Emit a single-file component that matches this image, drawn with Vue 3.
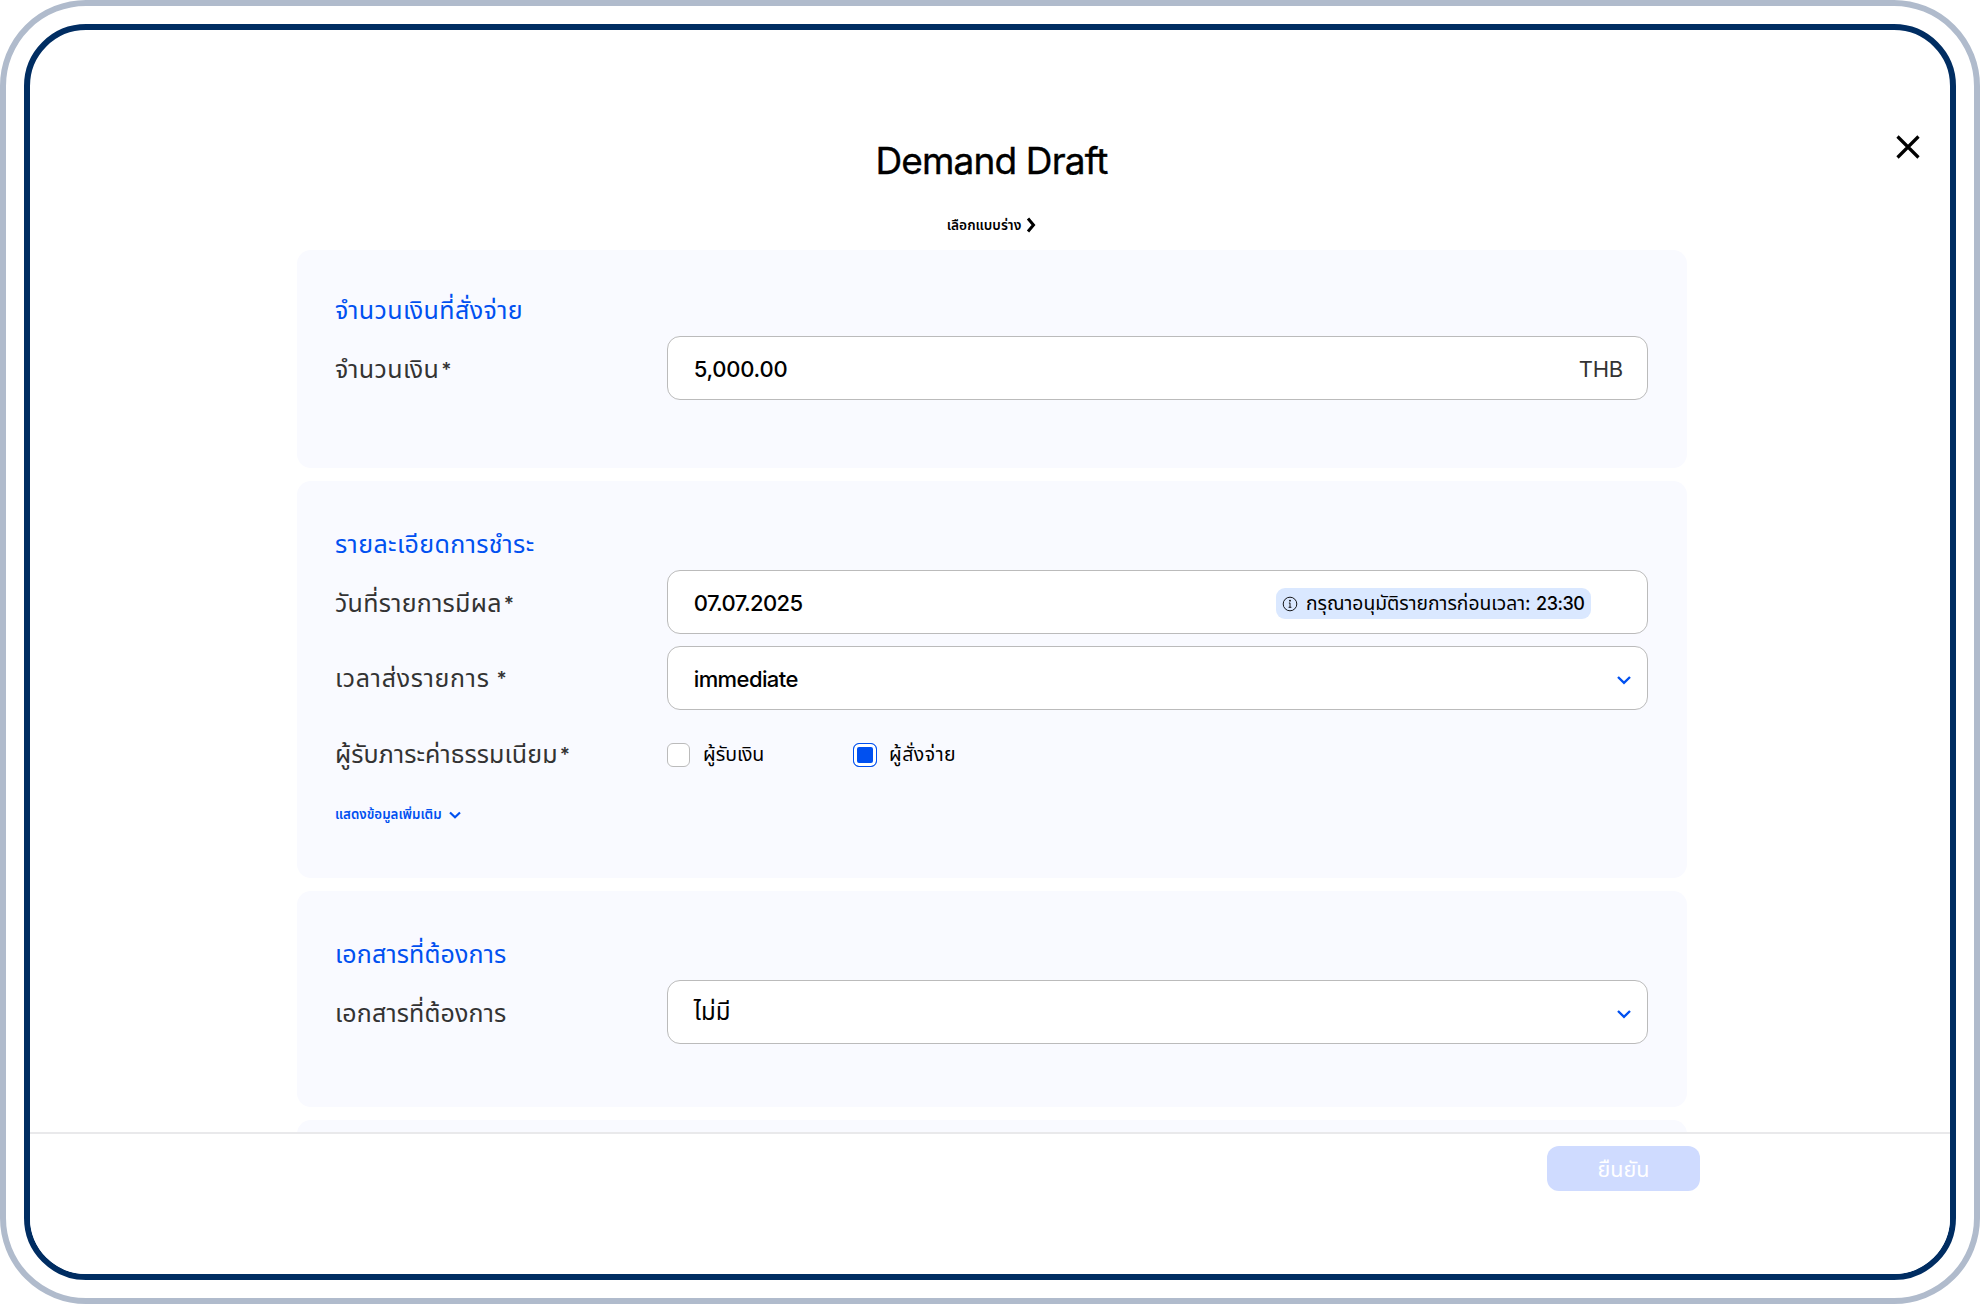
<template>
  <div class="device">
    <div class="screen">
      <button class="close" aria-label="close">
        <svg width="24" height="24" viewBox="0 0 24 24"><path d="M1.5 1.5L22.5 22.5M22.5 1.5L1.5 22.5" /></svg>
      </button>

      <header class="header">
        <h1>Demand Draft</h1>
        <a class="template-link">
          <span>เลือกแบบร่าง</span>
          <svg width="10" height="16" viewBox="0 0 10 16"><path d="M2 1.5L7.5 8L2 14.5" /></svg>
        </a>
      </header>

      <main class="content">
        <section class="card card-amount">
          <h2 class="t-amount">จำนวนเงินที่สั่งจ่าย</h2>
          <div class="row">
            <label><span class="l-amount">จำนวนเงิน</span><i>*</i></label>
            <div class="field">
              <span class="value v-amount">{{ form.amount }}</span>
              <span class="currency">THB</span>
            </div>
          </div>
        </section>

        <section class="card card-payment">
          <h2 class="t-payment">รายละเอียดการชำระ</h2>
          <div class="row">
            <label><span class="l-date">วันที่รายการมีผล</span><i>*</i></label>
            <div class="field">
              <span class="value v-date">{{ form.date }}</span>
              <span class="badge">
                <svg width="16" height="16" viewBox="0 0 16 16">
                  <circle cx="8" cy="8" r="6.8" />
                  <path d="M8 6.8V11.4M6.9 7H8M6.6 11.3H9.4" />
                  <circle class="dot" cx="8" cy="4.7" r="0.9" />
                </svg>
                <span class="badge-text">กรุณาอนุมัติรายการก่อนเวลา: <b>23:30</b></span>
              </span>
            </div>
          </div>
          <div class="row">
            <label><span class="l-time">เวลาส่งรายการ</span><i class="spaced">*</i></label>
            <div class="field">
              <span class="value v-time">{{ form.time }}</span>
              <svg class="chevron" width="16" height="12" viewBox="0 0 16 12"><path d="M2 3L8 8.8L14 3" /></svg>
            </div>
          </div>
          <div class="row">
            <label><span class="l-fee">ผู้รับภาระค่าธรรมเนียม</span><i>*</i></label>
            <div class="options">
              <div
                v-for="option in feeOptions"
                :key="option.id"
                class="option"
                :class="[option.id, { checked: form.fee === option.id }]"
                @click="form.fee = option.id"
              >
                <span class="box"></span>
                <span class="option-text">{{ option.label }}</span>
              </div>
            </div>
          </div>
          <a class="more">
            <span>แสดงข้อมูลเพิ่มเติม</span>
            <svg width="12" height="10" viewBox="0 0 12 10"><path d="M1 2.5L6 7.2L11 2.5" /></svg>
          </a>
        </section>

        <section class="card card-document">
          <h2 class="t-document">เอกสารที่ต้องการ</h2>
          <div class="row">
            <label><span class="l-document">เอกสารที่ต้องการ</span></label>
            <div class="field">
              <span class="value v-document">{{ form.document }}</span>
              <svg class="chevron" width="16" height="12" viewBox="0 0 16 12"><path d="M2 3L8 8.8L14 3" /></svg>
            </div>
          </div>
        </section>

        <section class="card card-next"></section>
      </main>

      <footer class="footer">
        <button class="confirm" disabled><span>ยืนยัน</span></button>
      </footer>
    </div>
  </div>
</template>

<script setup>
import { reactive } from 'vue';

const form = reactive({
  amount: '5,000.00',
  date: '07.07.2025',
  time: 'immediate',
  fee: 'payer',
  document: 'ไม่มี',
});

const feeOptions = [
  { id: 'payee', label: 'ผู้รับเงิน' },
  { id: 'payer', label: 'ผู้สั่งจ่าย' },
];
</script>

<style>
body {
  margin: 0;
  background: #fff;
}
</style>

<style scoped>
* {
  box-sizing: border-box;
}
.device {
  width: 1980px;
  height: 1304px;
  padding: 18px;
  border: 6px solid #b0bbcc;
  border-radius: 86px;
  font-family: Inter, "Noto Sans Thai", "Noto Sans", sans-serif;
  color: #000;
}
.screen {
  position: relative;
  display: flex;
  flex-direction: column;
  height: 1256px;
  border: 6px solid #002d62;
  border-radius: 62px;
  overflow: hidden;
}
svg {
  flex: none;
  fill: none;
  stroke: currentColor;
  stroke-width: 2;
}
button {
  border: none;
  background: none;
  padding: 0;
  font-family: inherit;
}
.close {
  position: absolute;
  top: 105px;
  right: 30px;
  width: 24px;
  height: 24px;
  color: #000;
}
.close svg {
  display: block;
  overflow: visible;
  stroke-width: 3.2;
}
.header {
  flex: none;
  height: 220px;
  padding: 106px 0 0 3px;
  display: flex;
  flex-direction: column;
  align-items: center;
}
h1 {
  margin: 0;
  font-size: 37px;
  font-weight: 400;
  line-height: 50px;
  letter-spacing: -0.85px;
  white-space: nowrap;
  -webkit-text-stroke: 0.4px #000;
}
.template-link {
  display: flex;
  align-items: center;
  gap: 5px;
  height: 20px;
  margin-top: 29px;
  font-size: 13.7px;
  font-weight: 600;
  line-height: 20px;
}
.template-link svg {
  stroke-width: 3;
}
.content {
  flex: none;
  height: 882px;
  width: 1390px;
  margin-left: 267px;
  overflow: hidden;
}
.card {
  padding: 0 39px 0 38px;
  margin-bottom: 13px;
  border-radius: 14px;
  background: #f9faff;
}
.card-amount {
  height: 218px;
  padding-top: 40px;
}
.card-payment {
  height: 397px;
  padding-top: 43px;
}
.card-document {
  height: 216px;
  padding-top: 43px;
}
.card-next {
  height: 216px;
}
h2 {
  height: 40px;
  margin: 0 0 6px;
  color: #0050f0;
  font-size: 25px;
  font-weight: 400;
  line-height: 40px;
  white-space: nowrap;
}
.t-amount,
.t-payment {
  letter-spacing: 0.4px;
}
.t-document,
.l-document {
  letter-spacing: 0.15px;
}
.row {
  display: flex;
  align-items: center;
  height: 64px;
  margin-bottom: 11.5px;
}
label {
  width: 332px;
  padding-top: 1px;
  color: #333;
  font-size: 25px;
  line-height: 40px;
  white-space: nowrap;
}
label i {
  margin-left: 2px;
  font-style: normal;
  font-size: 19px;
  font-weight: 600;
  line-height: 1;
  vertical-align: 2px;
}
label .spaced {
  margin-left: 7px;
}
.l-amount {
  letter-spacing: 0.4px;
}
.l-date {
  letter-spacing: 0.3px;
}
.l-time {
  letter-spacing: 0.7px;
}
.l-fee {
  letter-spacing: 0.1px;
}
.field {
  display: flex;
  align-items: center;
  width: 982px;
  height: 64px;
  padding: 2px 24px 0 26px;
  border: 1px solid #bbb;
  border-radius: 13px;
  background: #fff;
}
.value {
  flex: 1;
  font-size: 22px;
  font-weight: 500;
  white-space: nowrap;
}
.v-amount {
  letter-spacing: -0.25px;
}
.v-date,
.v-time {
  letter-spacing: -0.6px;
}
.v-document {
  font-size: 24px;
  font-weight: 400;
}
.currency {
  color: #333;
  font-size: 22px;
  letter-spacing: -0.2px;
}
.badge {
  display: flex;
  align-items: center;
  width: 315px;
  height: 31px;
  margin-right: 32px;
  padding-left: 6px;
  border-radius: 9px;
  background: #dae8ff;
  font-size: 19.3px;
  line-height: 31px;
  white-space: nowrap;
}
.badge b {
  font-size: 18px;
  font-weight: 500;
  letter-spacing: -0.5px;
}
.badge svg {
  margin: 2px 8px 0 0;
  stroke-width: 0.9;
}
.badge .dot {
  fill: #000;
  stroke: none;
}
.chevron {
  margin: 2px -9px 0 0;
  color: #0050f0;
  stroke-width: 2.4;
}
.options {
  display: flex;
  height: 24px;
  margin-top: 3px;
  font-size: 19.5px;
}
.option {
  display: flex;
  align-items: center;
  width: 186px;
  white-space: nowrap;
}
.payer .option-text {
  letter-spacing: 0.5px;
}
.box {
  flex: none;
  width: 23px;
  height: 24px;
  margin-right: 13px;
  border: 1px solid #bbb;
  border-radius: 6px;
  background: #fff;
}
.checked .box {
  width: 24px;
  margin-right: 12px;
  border-color: #0050f0;
  background: #0050f0;
  box-shadow: inset 0 0 0 3px #fff;
}
.more {
  display: flex;
  align-items: center;
  gap: 7px;
  height: 20px;
  margin-top: 20px;
  color: #0050f0;
  font-size: 13.3px;
  font-weight: 600;
  white-space: nowrap;
}
.more svg {
  stroke-width: 2.2;
}
.footer {
  flex: 1;
  padding: 12px 250px 0 0;
  border-top: 2px solid #e9e9eb;
  background: #fff;
}
.confirm {
  display: block;
  width: 153px;
  height: 45px;
  margin-left: auto;
  padding-top: 3px;
  border-radius: 12px;
  background: #cfdbff;
  color: #fff;
  font-size: 21.5px;
}
</style>
